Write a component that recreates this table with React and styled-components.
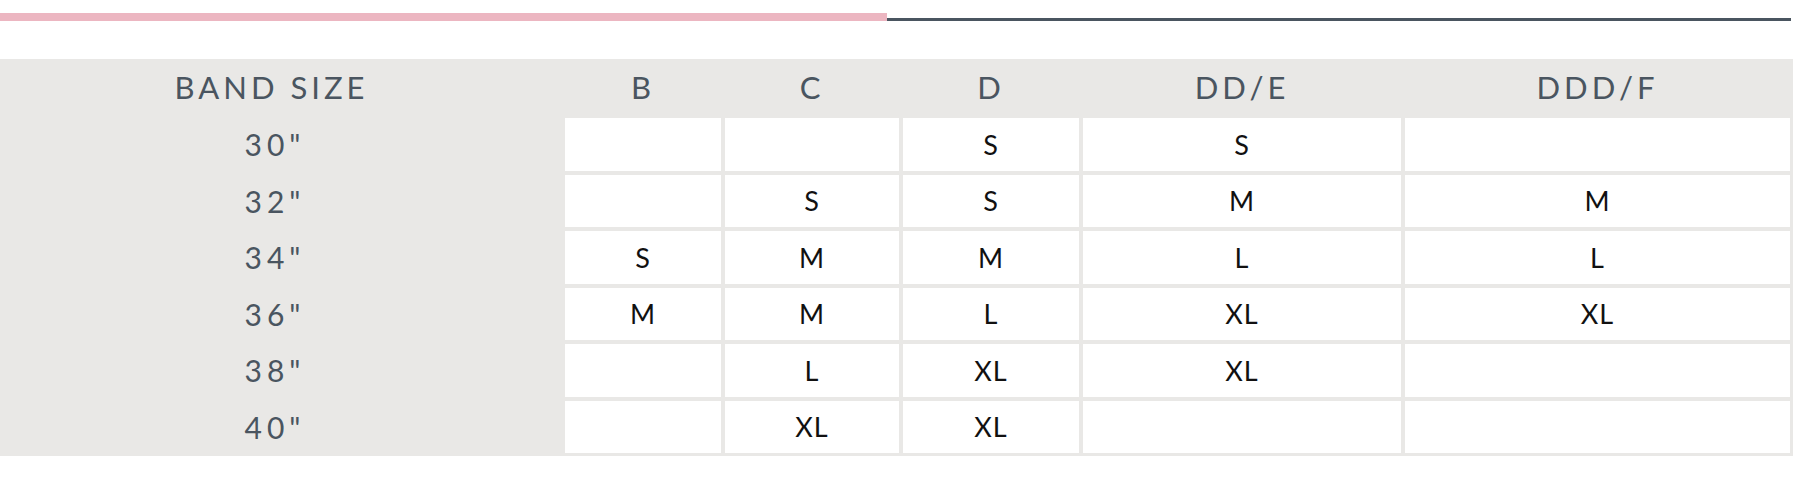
import React from 'react';
import styled, {createGlobalStyle} from 'styled-components';

const slate = '#4a5560';
const panel = '#e9e8e6';

const GlobalStyle = createGlobalStyle`
  body {
    margin: 0;
    background: #fff;
    font-family: Lato, "Liberation Sans", sans-serif;
  }
`;

const Page = styled.div`
  width: 1800px;
  padding-top: 13px;
`;

const Progress = styled.div`
  display: flex;
  align-items: flex-end;
  width: 1791px;
`;

const Track = styled.div`
  height: ${p => p.$thick}px;
  width: ${p => p.$width}px;
  flex: ${p => (p.$width ? 'none' : 1)};
  background: ${p => p.$color};
`;

const Chart = styled.div`
  margin-top: 38px;
  width: 1790px;
  display: grid;
  grid-template-columns: 561px 156px 174px 176px 318px 385px;
  grid-template-rows: 55px repeat(6, 52.5px);
  gap: 4px;
  padding: 0 3px 3px 0;
  background: ${panel};
`;

const Head = styled.div`
  display: flex;
  align-items: center;
  justify-content: center;
  color: ${slate};
  font-size: 31px;
  letter-spacing: 4px;
  padding-right: ${p => (p.$first ? 18 : 0)}px;
`;

const Band = styled(Head)`
  font-size: 30px;
  letter-spacing: 5px;
  padding-right: 11px;
`;

const Cell = styled.div`
  display: flex;
  align-items: center;
  justify-content: center;
  background: #fff;
  color: #111;
  font-size: 27px;
  letter-spacing: 1px;
`;

const cups = ['B', 'C', 'D', 'DD/E', 'DDD/F'];

const rows = [
  ['30"', ['', '', 'S', 'S', '']],
  ['32"', ['', 'S', 'S', 'M', 'M']],
  ['34"', ['S', 'M', 'M', 'L', 'L']],
  ['36"', ['M', 'M', 'L', 'XL', 'XL']],
  ['38"', ['', 'L', 'XL', 'XL', '']],
  ['40"', ['', 'XL', 'XL', '', '']],
];

const App = () => {
  return (
    <Page>
      <GlobalStyle />
      <Progress>
        <Track $width={887} $thick={8} $color="#ecb6c1" />
        <Track $thick={3} $color={slate} />
      </Progress>
      <Chart>
        <Head $first>BAND SIZE</Head>
        {cups.map(c => <Head key={c}>{c}</Head>)}
        {rows.map(([band, sizes]) => (
          <React.Fragment key={band}>
            <Band>{band}</Band>
            {sizes.map((s, i) => <Cell key={i}>{s}</Cell>)}
          </React.Fragment>
        ))}
      </Chart>
    </Page>
  );
};

export default App;
